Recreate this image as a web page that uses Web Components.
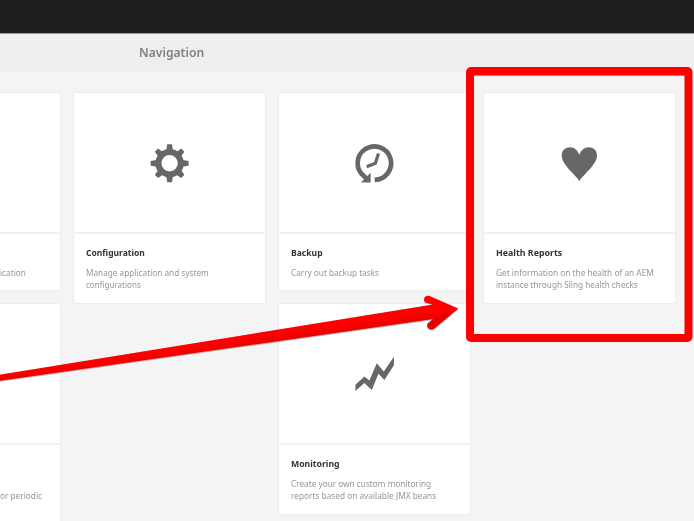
<!DOCTYPE html>
<html lang="en"><head><meta charset="utf-8"><title>Navigation</title>
<style>html,body{margin:0;width:694px;height:521px;overflow:hidden;background:#f4f4f4}body{font-family:"Noto Sans","Open Sans",sans-serif}</style>
</head><body>
<nav-console></nav-console>
<script>
/* One line of text, condensed horizontally to the width given. */
class FitText extends HTMLElement{
  connectedCallback(){
    const r=this.attachShadow({mode:'open'});
    r.innerHTML='<style>:host{display:block;white-space:nowrap}span{display:inline-block;transform-origin:0 50%}</style><span><slot></slot></span>';
    const s=r.querySelector('span'),w=+this.getAttribute('width');
    s.style.transform='scaleX('+w/s.offsetWidth+')';
  }
}
const ICONS={
gear:'<g fill="#676767" transform="translate(-.4 .3)"><path fill-rule="evenodd" d="M20 5.8a14.2 14.2 0 1 0 0 28.4a14.2 14.2 0 0 0 0-28.4zm0 6a8.2 8.2 0 1 1 0 16.4a8.2 8.2 0 0 1 0-16.4z"/><path d="M17.6 1h4.8l1.1 7h-7zM17.6 39h4.8l1.1-7h-7zM1 17.6v4.8l7 1.1v-7zM39 17.6v4.8l-7 1.1v-7z"/><path transform="rotate(45 20 20)" d="M17.7 1.4h4.6l1.1 7h-6.8zM17.7 38.6h4.6l1.1-7h-6.8zM1.4 17.7v4.6l7 1.1v-6.8zM38.6 17.7v4.6l-7 1.1v-6.8z"/></g>',
clock:'<g transform="translate(-.5 0)"><path d="M20.2 36.8A16.7 16.7 0 1 0 9.5 33.2L12.5 35.8" fill="none" stroke="#676767" stroke-width="4.7"/><path d="M16.1 29.8v9.7H6.5z" fill="#676767"/><path d="M24 10.6L20.8 20.3L12.2 23.7" fill="none" stroke="#676767" stroke-width="3.2"/></g>',
heart:'<path transform="translate(-.6 .2)" d="M20 37.8C15.8 31 2.3 21.5 2.3 12.3C2.3 7 6 4 10.8 4C15 4 18.5 7.3 19.9 11.7C21.3 7.3 25 4 29.2 4C34 4 37.6 7 37.6 12.3C37.6 21.5 24.2 31 20 37.8z" fill="#676767"/>',
chart:'<path transform="translate(-.4 -1)" d="M.8 31.8L9.8 23.4L14.8 27.4L22.2 10.2L29.2 18.4L39.3 3.8V12.2L29.8 27L23.8 20.8L17.2 37L9.8 30L.8 38z" fill="#676767"/>'
};
class ConsoleIcon extends HTMLElement{
  connectedCallback(){
    this.attachShadow({mode:'open'}).innerHTML='<style>:host{display:block;width:40px;height:40px}svg{display:block}</style><svg width="40" height="40" viewBox="0 0 40 40">'+(ICONS[this.getAttribute('name')]||'')+'</svg>';
  }
}
class NavCard extends HTMLElement{
  connectedCallback(){
    const n=this.getAttribute('icon');
    this.attachShadow({mode:'open'}).innerHTML=`<style>
    :host{display:block;box-sizing:border-box;width:193px;background:#fff;border:1px solid #ececec;border-radius:3px}
    .media{height:139px;display:flex;align-items:center;justify-content:center;border-bottom:2px solid #f1f1f1}
    .body{padding:10.5px 12px 0}
    .title{height:15px;font-size:9.4px;line-height:15px;font-weight:700;color:#323232;margin-bottom:7.1px}
    .desc{font-size:9.5px;line-height:12.7px;color:#969696}
    </style><div class="media">${n?'<console-icon name="'+n+'"></console-icon>':''}</div>
    <div class="body"><div class="title"><slot name="title"></slot></div><div class="desc"><slot></slot></div></div>`;
  }
}
class MarkupOverlay extends HTMLElement{
  connectedCallback(){
    this.attachShadow({mode:'open'}).innerHTML=`<style>:host{position:absolute;left:0;top:0}svg{display:block}</style>
    <svg width="694" height="521" viewBox="0 0 694 521"><defs>
    <linearGradient id="g" gradientUnits="userSpaceOnUse" x1="220" y1="335" x2="222.5" y2="352"><stop offset=".4" stop-color="#f00"/><stop offset="1" stop-color="#e20000"/></linearGradient>
    <filter id="s" x="-5%" y="-10%" width="110%" height="125%"><feDropShadow dx="0" dy=".6" stdDeviation=".5" flood-color="#000" flood-opacity=".5"/></filter></defs>
    <path d="M474 75.6H685" stroke="#888" stroke-width="1"/>
    <rect x="470" y="71" width="218.5" height="267" rx="1" fill="none" stroke="#f00" stroke-width="8" stroke-linejoin="round"/>
    <g filter="url(#s)"><path d="M-2 375L433 304.6L426 302.6C422 300.4 424.6 294.4 429.4 296L458.2 308.6L434.4 328.6C430 331.4 425 326.6 428.2 323L433 318.9L-2 381z" fill="url(#g)"/></g></svg>`;
  }
}
class NavConsole extends HTMLElement{
  connectedCallback(){
    this.attachShadow({mode:'open'}).innerHTML=`<style>
    :host{display:block;position:relative;width:694px;height:521px;overflow:hidden;background:#f4f4f4}
    .top{height:33px;background:#1e1e1e;border-bottom:1px solid #999}
    header{box-sizing:border-box;background:#eee;border-bottom:1px solid #eaeaea;padding:8px 0 0 139px;font-size:13.3px;line-height:20px;font-weight:600;color:#808080;height:38px}
    main{display:flex;gap:12px;align-items:flex-start;margin-left:-132px;padding-top:20px}
    .col{display:flex;flex-direction:column;gap:12px;flex:none}
    .short{height:199px}.tall{height:212px}.taller{height:225px}
    .l1{margin-left:119px}.l2{margin-left:119.3px;padding-top:12.7px}
    </style><div class="top"></div><header><fit-text width="65">Navigation</fit-text></header>
    <main><div class="col"><nav-card class="short"><fit-text class="l1" width="26">ication</fit-text></nav-card><nav-card class="taller"><fit-text class="l2" width="41.7">or periodic</fit-text></nav-card></div>
    <div class="col"><nav-card class="tall" icon="gear"><fit-text slot="title" width="59">Configuration</fit-text><fit-text width="123">Manage application and system</fit-text><fit-text width="55">configurations</fit-text></nav-card></div>
    <div class="col"><nav-card class="short" icon="clock"><fit-text slot="title" width="32">Backup</fit-text><fit-text width="88">Carry out backup tasks</fit-text></nav-card>
    <nav-card class="tall" icon="chart"><fit-text slot="title" width="49">Monitoring</fit-text><fit-text width="140.5">Create your own custom monitoring</fit-text><fit-text width="145.5">reports based on available JMX beans</fit-text></nav-card></div>
    <div class="col"><nav-card class="tall" icon="heart"><fit-text slot="title" width="66">Health Reports</fit-text><fit-text width="158">Get information on the health of an AEM</fit-text><fit-text width="142">instance through Sling health checks</fit-text></nav-card></div></main>
    <markup-overlay></markup-overlay>`;
  }
}
customElements.define('console-icon',ConsoleIcon);
customElements.define('nav-card',NavCard);
customElements.define('markup-overlay',MarkupOverlay);
customElements.define('nav-console',NavConsole);
customElements.define('fit-text',FitText);
</script></body></html>
